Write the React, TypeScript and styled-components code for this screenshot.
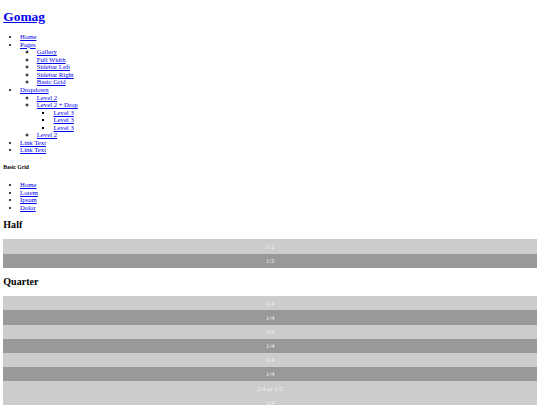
import React, { FC } from 'react'
import styled, { createGlobalStyle } from 'styled-components'

// the page is a wide unstyled layout photographed small, so every size is scaled
const S = 0.418
const px = (n: number) => `${(n * S).toFixed(2)}px`

const GlobalStyle = createGlobalStyle`
  html, body {
    background: #fff;
  }
  body {
    margin: 0 ${px(8)} ${px(8)};
    font-family: 'Liberation Serif', 'Times New Roman', serif;
    font-size: ${px(16)};
    line-height: ${px(18)};
    color: #000;
  }
  a {
    color: #0000ee;
    text-decoration: underline;
  }
`

const Title = styled.h1`
  font-size: ${px(32)};
  line-height: ${px(37)};
  font-weight: bold;
  margin: ${px(21.44)} 0;
`

const NavList = styled.ul<{ $depth: number }>`
  margin: ${p => (p.$depth === 0 ? `${px(16)} 0` : '0')};
  padding-left: ${px(40)};
  list-style-type: ${p => ['disc', 'circle', 'square'][p.$depth] || 'square'};
`

const SubHeading = styled.h5`
  font-size: ${px(13.28)};
  line-height: ${px(16)};
  font-weight: bold;
  margin: ${px(26)} 0 ${px(23.5)};
`

const Heading = styled.h2`
  font-size: ${px(24)};
  line-height: ${px(27)};
  font-weight: bold;
  margin: ${px(19.92)} 0 ${px(21)};
`

const Row = styled.div`
  display: flex;
  flex-direction: column;
`

const Cell = styled.div<{ $dark: boolean }>`
  padding: ${px(8)} 0;
  text-align: center;
  background: ${p => (p.$dark ? '#999' : '#ccc')};
  color: #f2f2f2;
`

type NavItem = { label: string; children?: NavItem[] }

const menu: NavItem[] = [
  { label: 'Home' },
  {
    label: 'Pages',
    children: [
      { label: 'Gallery' },
      { label: 'Full Width' },
      { label: 'Sidebar Left' },
      { label: 'Sidebar Right' },
      { label: 'Basic Grid' }
    ]
  },
  {
    label: 'Dropdown',
    children: [
      { label: 'Level 2' },
      {
        label: 'Level 2 + Drop',
        children: [{ label: 'Level 3' }, { label: 'Level 3' }, { label: 'Level 3' }]
      },
      { label: 'Level 2' }
    ]
  },
  { label: 'Link Text' },
  { label: 'Link Text' }
]

const Menu: FC<{ items: NavItem[]; depth?: number }> = ({ items, depth = 0 }) => (
  <NavList $depth={depth}>
    {items.map((item, i) => (
      <li key={i}>
        <a href="#">{item.label}</a>
        {item.children && <Menu items={item.children} depth={depth + 1} />}
      </li>
    ))}
  </NavList>
)

const Grid: FC<{ rows: string[][] }> = ({ rows }) => (
  <>
    {rows.map((cells, r) => (
      <Row key={r}>
        {cells.map((c, i) => (
          <Cell key={i} $dark={i % 2 === 1}>
            {c}
          </Cell>
        ))}
      </Row>
    ))}
  </>
)

const App: FC = () => (
  <>
    <GlobalStyle />
    <Title>
      <a href="#">Gomag</a>
    </Title>
    <Menu items={menu} />
    <SubHeading>Basic Grid</SubHeading>
    <Menu items={[{ label: 'Home' }, { label: 'Lorem' }, { label: 'Ipsum' }, { label: 'Dolor' }]} />
    <Heading>Half</Heading>
    <Grid rows={[['1/2', '1/2']]} />
    <Heading>Quarter</Heading>
    <Grid
      rows={[
        ['1/4', '1/4', '1/4', '1/4'],
        ['1/4', '1/4', '2/4 or 1/2'],
        ['1/4', '1/4', '1/4', '1/4'],
        ['1/4', '3/4']
      ]}
    />
  </>
)

export default App
